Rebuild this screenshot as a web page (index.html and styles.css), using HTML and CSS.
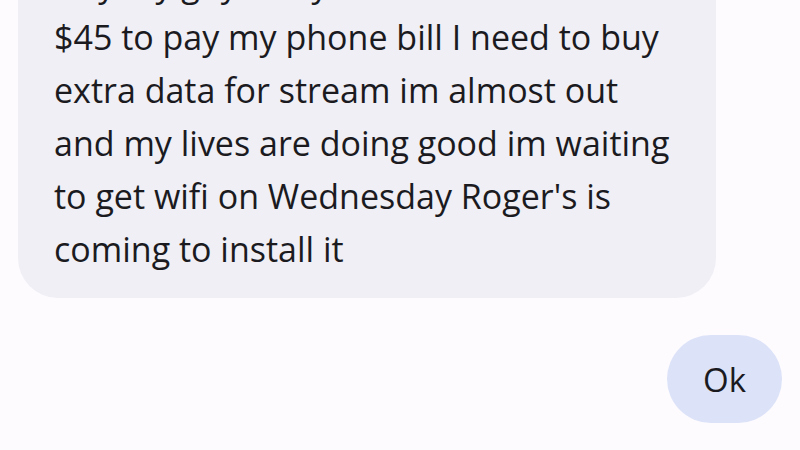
FILE: index.html
```html
<!DOCTYPE html>
<html lang="en">
<head>
    <meta charset="UTF-8">
    <meta name="viewport" content="width=device-width, initial-scale=1.0">
    <title>Messages</title>
    <link rel="stylesheet" href="styles.css">
</head>
<body>
    <div class="thread">
        <div class="msg incoming">
            <p>Hey my guy can you lend me like<br>$45 to pay my phone bill I need to buy<br>extra data for stream im almost out<br>and my lives are doing good im waiting<br>to get wifi on Wednesday Roger's is<br>coming to install it</p>
        </div>
        <div class="msg outgoing">
            <p>Ok</p>
        </div>
    </div>
</body>
</html>
```

FILE: styles.css
```css
/* Page */
body {
    margin: 0;
    padding: 0;
    height: 100vh;
    overflow: hidden;
    background-color: #fdfbfe;
    font-family: 'Open Sans', 'Noto Sans', sans-serif;
    color: #1b1b1f;
}

/* Conversation column */
.thread {
    display: flex;
    flex-direction: column;
    padding: 0 18px;
}

.msg p {
    margin: 0;
    white-space: nowrap;
}

/* Bubble from the other person */
.incoming {
    align-self: flex-start;
    margin-top: -63px;
    width: 626px;
    padding: 21px 36px 22px;
    background-color: #f0eff5;
    border-radius: 40px;
    font-size: 34px;
    line-height: 53px;
}

/* My reply */
.outgoing {
    align-self: flex-end;
    margin-top: 37px;
    height: 88px;
    padding: 0 36px;
    display: flex;
    align-items: center;
    background-color: #dce2f8;
    border-radius: 44px;
    font-size: 33px;
}
```
